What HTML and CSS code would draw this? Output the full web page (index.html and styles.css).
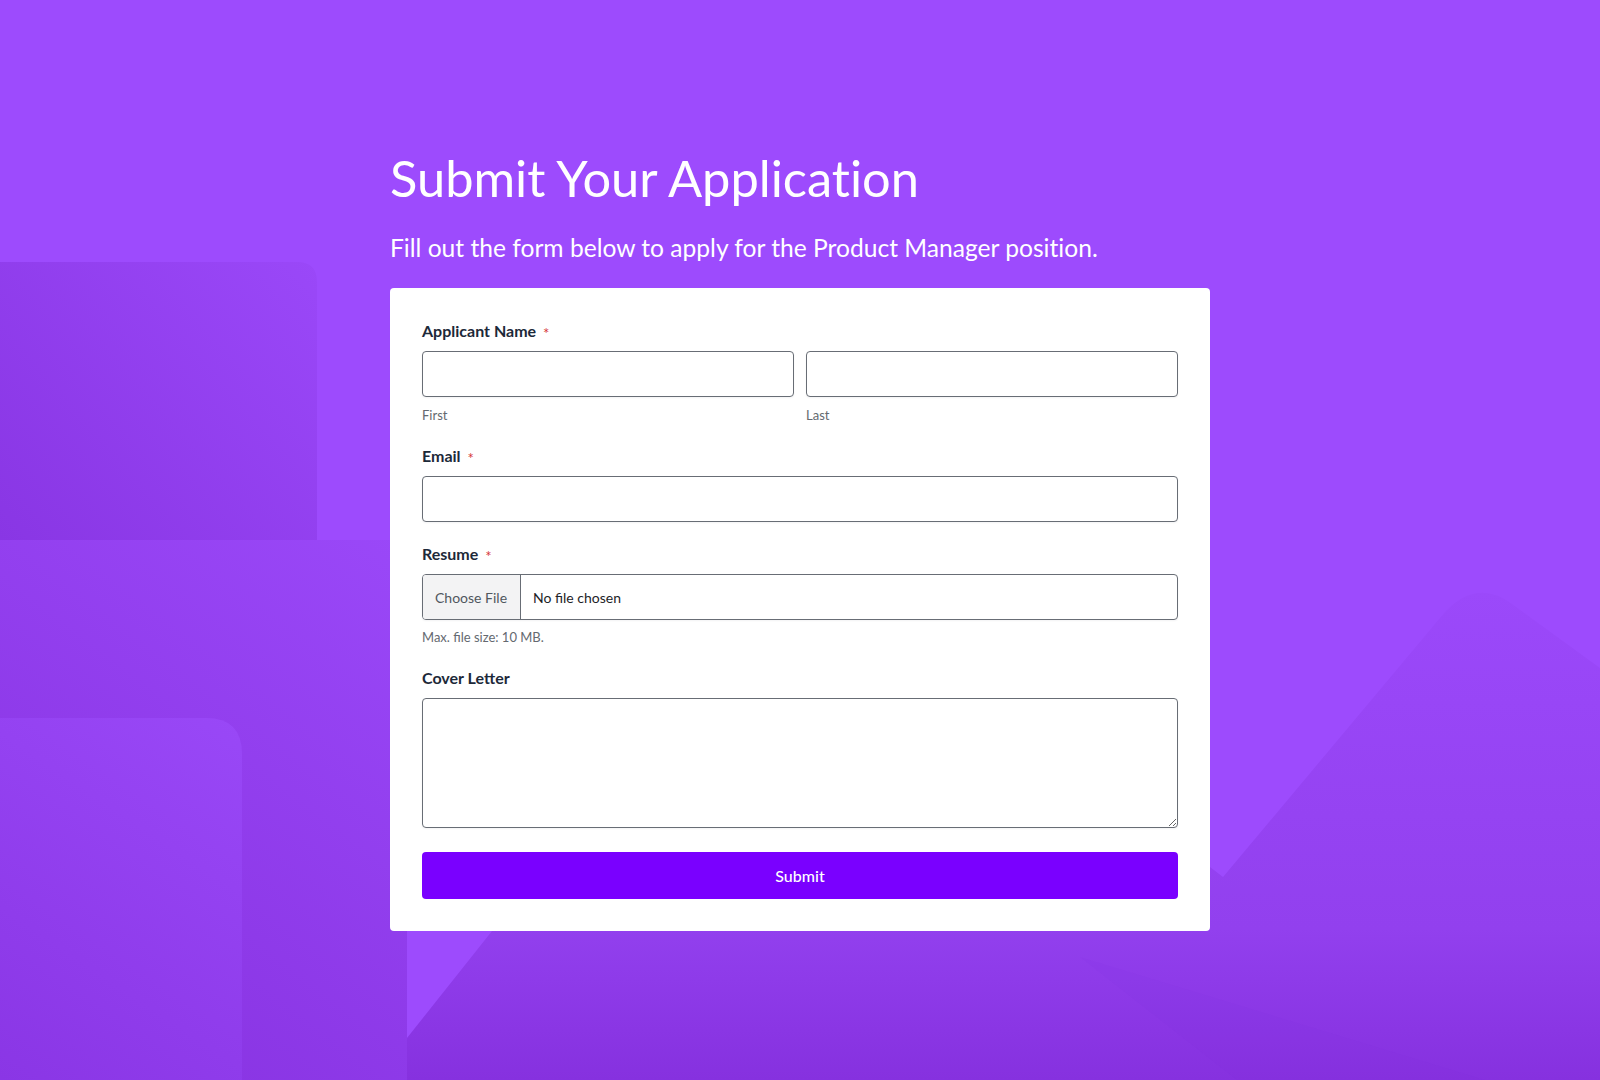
FILE: index.html
```html
<!DOCTYPE html>
<html lang="en">
<head>
<meta charset="utf-8">
<title>Submit Your Application</title>
<link rel="stylesheet" href="styles.css">
</head>
<body>
<div class="page">
  <div class="bg" aria-hidden="true">
    <svg viewBox="0 0 1600 1080" preserveAspectRatio="none" xmlns="http://www.w3.org/2000/svg">
      <defs>
        <linearGradient id="gA" gradientUnits="userSpaceOnUse" x1="0" y1="540" x2="317" y2="262">
          <stop offset="0" stop-color="#8936e4"/>
          <stop offset="1" stop-color="#9a48f8"/>
        </linearGradient>
        <linearGradient id="gL" gradientUnits="userSpaceOnUse" x1="0" y1="1080" x2="407" y2="540">
          <stop offset="0" stop-color="#8631df"/>
          <stop offset="1" stop-color="#9a48f8"/>
        </linearGradient>
        <linearGradient id="gB" gradientUnits="userSpaceOnUse" x1="0" y1="1080" x2="242" y2="718">
          <stop offset="0" stop-color="#8a36e5"/>
          <stop offset="1" stop-color="#9948f7"/>
        </linearGradient>
        <linearGradient id="gM" gradientUnits="userSpaceOnUse" x1="0" y1="590" x2="0" y2="1080">
          <stop offset="0" stop-color="#9b49fa"/>
          <stop offset="0.69" stop-color="#9240ee"/>
          <stop offset="1" stop-color="#8631df"/>
        </linearGradient>
      </defs>
      <rect x="0" y="0" width="1600" height="1080" fill="#9d4bfd"/>
      <path d="M0 262 H297 Q317 262 317 282 V540 H0 Z" fill="url(#gA)"/>
      <path d="M0 540 H407 V1080 H0 Z" fill="url(#gL)"/>
      <path d="M0 718 H206 Q242 718 242 754 V1080 H0 Z" fill="url(#gB)"/>
      <path d="M407 1038 L492 931 L700 660 L1100 782 L1223 877 L1445 612 Q1477 578 1512 604 L1600 668 V1080 H407 Z" fill="url(#gM)"/>
      <path d="M1080 957 L1485 1080 L1237 1080 Z" fill="#7a22d2" opacity="0.05"/>
    </svg>
  </div>

  <main class="wrap">
    <h1 class="title">Submit Your Application</h1>
    <p class="lead">Fill out the form below to apply for the Product Manager position.</p>

    <form class="card">
      <div class="field">
        <div class="label">Applicant Name <span class="req">*</span></div>
        <div class="name-row">
          <div class="col">
            <input class="input" type="text" aria-label="First">
            <div class="sub">First</div>
          </div>
          <div class="col">
            <input class="input" type="text" aria-label="Last">
            <div class="sub">Last</div>
          </div>
        </div>
      </div>

      <div class="field">
        <div class="label">Email <span class="req">*</span></div>
        <input class="input" type="email" aria-label="Email">
      </div>

      <div class="field">
        <div class="label">Resume <span class="req">*</span></div>
        <label class="file">
          <input class="file-native" type="file">
          <span class="file-btn">Choose File</span>
          <span class="file-name">No file chosen</span>
        </label>
        <div class="hint">Max. file size: 10 MB.</div>
      </div>

      <div class="field">
        <div class="label">Cover Letter</div>
        <textarea class="textarea" aria-label="Cover Letter"></textarea>
      </div>

      <button class="submit" type="button">Submit</button>
    </form>
  </main>
</div>
</body>
</html>
```

FILE: styles.css
```css
html, body {
  margin: 0;
  padding: 0;
}

body {
  font-family: Lato, "Open Sans", "Liberation Sans", sans-serif;
  background: #9d4bfd;
}

.page {
  position: relative;
  min-height: 1080px;
  overflow: hidden;
}

.bg {
  position: absolute;
  inset: 0;
  z-index: 0;
}

.bg svg {
  display: block;
  width: 100%;
  height: 100%;
}

.wrap {
  position: relative;
  z-index: 1;
  width: 820px;
  margin: 0 auto;
  padding-top: 148px;
}

.title {
  margin: 0;
  font-size: 50.6px;
  line-height: 60px;
  font-weight: 400;
  color: #ffffff;
  font-variant-ligatures: no-common-ligatures;
}

.lead {
  margin: 22px 0 22px;
  font-size: 24.6px;
  line-height: 36px;
  font-weight: 400;
  color: #ffffff;
  font-variant-ligatures: no-common-ligatures;
}

.card {
  background: #ffffff;
  border-radius: 4px;
  padding: 31px 32px 32px;
  display: flex;
  flex-direction: column;
  gap: 20px;
}

.field {
  display: flex;
  flex-direction: column;
}

.label {
  font-size: 16px;
  line-height: 24px;
  font-weight: 700;
  color: #1d2939;
  margin-bottom: 8px;
}

.req {
  color: #d63638;
  font-size: 15px;
  line-height: 0;
  font-weight: 400;
  margin-left: 3px;
  vertical-align: -2px;
}

.name-row {
  display: grid;
  grid-template-columns: 1fr 1fr;
  gap: 12px;
}

.col {
  display: flex;
  flex-direction: column;
}

.input {
  display: block;
  width: 100%;
  height: 46px;
  box-sizing: border-box;
  margin: 0;
  border: 1px solid #686d75;
  border-radius: 4px;
  background: #ffffff;
  box-shadow: 0 1px 2px rgba(16, 24, 40, 0.05);
  font: inherit;
}

.sub {
  margin-top: 9px;
  font-size: 13px;
  line-height: 18px;
  color: #646970;
}

.hint {
  margin-top: 8px;
  font-size: 13px;
  line-height: 18px;
  color: #646970;
}

.file {
  display: flex;
  align-items: stretch;
  height: 46px;
  box-sizing: border-box;
  border: 1px solid #686d75;
  border-radius: 4px;
  overflow: hidden;
  background: #ffffff;
  box-shadow: 0 1px 2px rgba(16, 24, 40, 0.05);
  cursor: pointer;
}

.file-native {
  display: none;
}

.file-btn {
  display: flex;
  align-items: center;
  padding: 0 13px 0 12px;
  background: #f3f3f4;
  border-right: 1px solid #686d75;
  font-size: 14px;
  color: #50575e;
}

.file-name {
  display: flex;
  align-items: center;
  padding-left: 12px;
  font-size: 14px;
  color: #1d2327;
}

.textarea {
  display: block;
  width: 100%;
  height: 130px;
  box-sizing: border-box;
  margin: 0;
  border: 1px solid #686d75;
  border-radius: 4px;
  background: #ffffff;
  box-shadow: 0 1px 2px rgba(16, 24, 40, 0.05);
  resize: vertical;
  font: inherit;
}

.submit {
  margin-top: 4px;
  height: 47px;
  border: 0;
  border-radius: 4px;
  background: #7a00ff;
  color: #ffffff;
  font-family: inherit;
  font-size: 16px;
  font-weight: 500;
  cursor: pointer;
}
```
